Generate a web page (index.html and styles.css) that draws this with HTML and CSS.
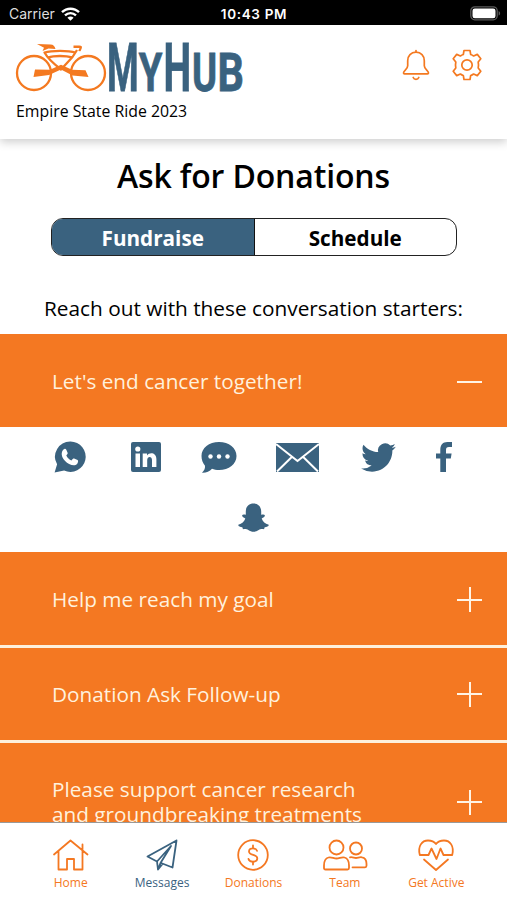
FILE: index.html
```html
<!DOCTYPE html>
<html lang="en">
<head>
<meta charset="utf-8">
<title>MyHub</title>
<link rel="stylesheet" href="styles.css">
</head>
<body>
<div class="app">
  <div class="status">
    <div class="carrier"><span>Carrier</span>
      <svg width="19" height="14" viewBox="0 0 19 14" fill="none" stroke="#fff" stroke-width="2.4"><path d="M1 5.200C5.800.5 13.200.5 18 5.200"/><path d="M4 8.400c3.200-3 7.800-3 11 0"/><path d="M6.400 10.700c1.800-1.700 4.400-1.700 6.200 0L9.500 13.800z" fill="#fff" stroke="none"/></svg>
    </div>
    <div class="clock">10:43 PM</div>
    <div class="battery"><svg width="31" height="15" viewBox="0 0 31 15"><rect x=".8" y=".8" width="26.400" height="13" rx="4" fill="none" stroke="#5b5b5b" stroke-width="1.300"/><rect x="2.500" y="2.400" width="23" height="9.800" rx="2.300" fill="#fff"/><path d="M28.600 5c2 .8 2 3.800 0 4.600z" fill="#5b5b5b"/></svg></div>
  </div>
  <header class="header">
    <div class="brand">
      <svg class="logo" width="240" height="52" viewBox="0 0 240 52">
        <g fill="none" stroke="#f47920" stroke-width="2.300"><circle cx="19" cy="32" r="17"/><circle cx="73" cy="32" r="17"/></g>
        <path fill="#f47920" d="M22 3l13.500.6c3 .2 4 1.500 5 4.400l-7-.6-6 2.600 1.500-3.200zM58.500 4.500h5.800c2.500 0 3.200 1 2.400 3l-1.200 2.800-2.200-.3 1.200-3h-6z"/>
        <path fill="none" stroke="#f47920" stroke-width="2.300" stroke-linejoin="round" d="M62 9L57.500 16 46 28.500C39 23 33 18 29.500 11.500c7-2.300 24-2.300 31 0M33 16.500c6-2 18-2 24 0"/>
        <path fill="#f47920" d="M20 28.500l15 .3 11-5 11 5 13.500.5 3 6.700-16-1.500L46 28.500l-12 5.500-15.500 2z"/>
        <g class="word">
          <text transform="translate(92 50) scale(.54 1)" font-size="67">M</text>
          <text transform="translate(123.700 50) scale(.7 1)" font-size="54.500">Y</text>
          <text transform="translate(148.600 50) scale(.585 1)" font-size="67">H</text>
          <text transform="translate(177 50) scale(.7 1)" font-size="54.500">U</text>
          <text transform="translate(202.500 50) scale(.76 1)" font-size="54.500">B</text>
        </g>
      </svg>
      <div class="event">Empire State Ride 2023</div>
    </div>
    <div class="actions">
      <svg width="28" height="32" viewBox="0 0 28 32" fill="none" stroke="#f47920" stroke-width="1.700" stroke-linecap="round" stroke-linejoin="round"><path d="M14 1.500v1.500M14 3.200c-5 0-8.300 3.500-8.300 8.500v5c0 3.500-4.200 5-4.200 7.300 0 .6.500.9 1 .9h23c.5 0 1-.3 1-.9 0-2.300-4.200-3.800-4.200-7.300v-5c0-5-3.300-8.500-8.300-8.500zM11.200 28.500c1 2.400 4.600 2.400 5.600 0"/></svg>
      <svg width="32" height="32" viewBox="0 0 32 32" fill="none" stroke="#f47920" stroke-width="1.700" stroke-linejoin="round"><path d="M13 1.500h6l.7 4c1 .3 2 .8 2.900 1.500l3.700-1.600 3.500 4.400-2.600 3.200c.4 2 .4 4 0 6l2.600 3.200-3.500 4.400-3.700-1.600c-.9.700-1.900 1.200-2.900 1.500l-.7 4h-6l-.7-4c-1-.3-2-.8-2.900-1.500l-3.700 1.600-3.500-4.400L4.800 19c-.4-2-.4-4 0-6L2.200 9.800l3.500-4.400L9.400 7c.9-.7 1.900-1.200 2.900-1.500z"/><circle cx="16" cy="16" r="5.200"/></svg>
    </div>
  </header>
  <main class="content">
    <h1>Ask for Donations</h1>
    <div class="tabs"><div class="tab active">Fundraise</div><div class="tab">Schedule</div></div>
    <p class="lead">Reach out with these conversation starters:</p>
    <section class="item"><span>Let's end cancer together!</span><i class="sign minus"></i></section>
    <div class="share">
      <div class="row">
        <svg width="32" height="32" viewBox="0 0 32 32"><path fill="#3a627f" d="M16.500.5a15.200 15.200 0 1 1-6.400 29L.6 31.500l2.500-8.200A15.200 15.200 0 0 1 16.500.5z"/><path fill="#fff" d="M9.500 8.500c1-1 2.300-.9 2.800.2l1.300 3c.3.700-.2 1.500-1.300 2.700 1.200 2.400 2.900 4 5.200 5 1.300-1.600 1.900-2.100 2.600-1.800l3.500 1.500c.9.500.5 2.800-.5 3.800-1.800 1.800-4.800 1.600-8 0-3-1.500-5.300-4-6.800-7-1-2.700-.8-5.500 1.200-7.400z"/></svg>
        <svg width="30" height="30" viewBox="0 0 30 30"><rect width="30" height="30" rx="2" fill="#3a627f"/><g fill="#fff"><circle cx="6.800" cy="7" r="2.600"/><path d="M4.500 11.500H9V25H4.500zM11.700 11.500H16v1.900c2.400-3.700 9.400-3.100 9.400 3.600v8H21v-7c0-4.300-4.800-4-4.800 0v7h-4.500z"/></g></svg>
        <svg width="36" height="31" viewBox="0 0 36 31"><path fill="#3a627f" d="M18 0c10 0 17.500 6 17.500 14S28 28 18 28c-2.500 0-5-.4-7-1.200C8.500 29.500 4.800 31 1 30.700c2.300-2.200 3.200-4.400 3-7C1.700 21 .5 17.800.5 14 .5 6 8 0 18 0z"/><g fill="#fff"><circle cx="9.500" cy="14.500" r="2.200"/><circle cx="18" cy="14.500" r="2.200"/><circle cx="26.500" cy="14.500" r="2.200"/></g></svg>
        <svg width="43" height="29" viewBox="0 0 43 29"><path fill="#3a627f" d="M0 0h43v29H0z"/><path fill="none" stroke="#fff" stroke-width="2" d="M0 1l21.500 17L43 1M1 28.500L15.800 14M42 28.500L27.200 14"/></svg>
        <svg width="35" height="29" viewBox="0 2 24 20"><path fill="#3a627f" d="M23.950 4.570a10 10 0 0 1-2.820.77 4.960 4.960 0 0 0 2.160-2.720c-.95.550-2 .950-3.120 1.180a4.920 4.920 0 0 0-8.380 4.480C7.690 8.090 4.070 6.130 1.640 3.160a4.820 4.820 0 0 0-.670 2.480c0 1.710.870 3.210 2.190 4.100a4.900 4.900 0 0 1-2.230-.620v.060a4.920 4.920 0 0 0 3.950 4.830 5 5 0 0 1-2.210.080 4.940 4.940 0 0 0 4.600 3.420A9.870 9.870 0 0 1 0 19.540a14 14 0 0 0 7.550 2.210c9.050 0 14-7.500 14-13.980 0-.210 0-.420-.020-.630a9.940 9.940 0 0 0 2.420-2.570z"/></svg>
        <svg width="16" height="30" viewBox="0 0 16 30"><path fill="#3a627f" d="M4.300 30V16.500H0v-5h4.300V7.700C4.300 2.700 7 0 11.300 0H16v5h-3c-2.400 0-3 1.100-3 2.900v3.600h5.600l-.8 5H10V30z"/></svg>
      </div>
      <svg width="31" height="29" viewBox="0 0 31 29"><path fill="#3a627f" d="M15.500.5c4.700 0 7.700 3.300 7.700 8v3.300c1.300-.3 3-.6 3.500.3.600 1.400-1.200 2.300-3 3.300 1.200 3.200 3.300 5.300 7 6.300.3 1.700-1.900 2.300-4 2.600l-.7 1.900c-1.700-.2-3.700-.4-5.300.8-3.300 2.400-7.100 2.400-10.400 0-1.600-1.200-3.600-1-5.300-.8l-.7-1.900c-2.100-.3-4.300-.9-4-2.600 3.700-1 5.800-3.100 7-6.300-1.800-1-3.600-1.900-3-3.300.5-.9 2.200-.6 3.500-.3V8.500c0-4.700 3-8 7.700-8z"/></svg>
    </div>
    <section class="item"><span>Help me reach my goal</span><i class="sign plus"></i></section>
    <section class="item"><span>Donation Ask Follow-up</span><i class="sign plus"></i></section>
    <section class="item tall"><span>Please support cancer research<br>and groundbreaking treatments</span><i class="sign plus"></i></section>
  </main>
  <nav class="nav">
    <div class="link"><svg width="36" height="32" viewBox="0 0 36 32"><path d="M1 15.500L17.500 1.500 34.500 15.500M5.500 12v18.500h8.500V20h7v10.500h8.500V12M29.500 10.500V5.500"/></svg><span>Home</span></div>
    <div class="link current"><svg width="32" height="32" viewBox="0 0 32 32"><path d="M30.500 1.500L1.500 17.500l9.500 5M30.500 1.500l-4 27-11.500-4.500M11 22.500L25 7 14.500 24l-2.500 6.500zM12 30.500l4.500-5.500"/></svg><span>Messages</span></div>
    <div class="link"><svg width="32" height="32" viewBox="0 0 32 32"><circle cx="16" cy="16" r="14.800"/><path d="M20 11.800c-.6-1.600-2-2.500-4-2.500-2.300 0-4 1.200-4 3.200 0 4.500 8.300 2.300 8.300 6.800 0 2.200-1.800 3.400-4.300 3.400-2.400 0-4-1-4.500-2.800M16 6.500v2.800M16 22.700v2.800"/></svg><span>Donations</span></div>
    <div class="link"><svg width="46" height="32" viewBox="0 0 46 32"><circle cx="14.500" cy="8.500" r="7"/><circle cx="34" cy="9.500" r="6"/><path d="M6.500 18.500c3-.8 5 1 8 1s5-1.800 8-1c3 .8 4.500 3.500 4.500 8v2.500c0 1-.5 1.500-1.500 1.500H3.500c-1 0-1.500-.5-1.500-1.500v-2.500c0-4.500 1.500-7.200 4.500-8zM28 18.300c2.500-.5 4 .7 6 .7s3.500-1.200 6-.7c3 .5 4.500 3 4.500 6.500v2c0 1-.5 1.500-1.500 1.500H30.500"/></svg><span>Team</span></div>
    <div class="link"><svg width="36" height="32" viewBox="0 0 36 32"><path d="M1.800 16C-.5 7 4 1.500 10 1.500c4 0 6.500 1.500 8 3.500 1.500-2 4-3.500 8-3.500 6 0 10.500 5.500 8.200 14.500H25.500L22.500 9.500l-4 10.500-5-10.500L10.500 16zM6 20.500L18 31 30 20.500"/></svg><span>Get Active</span></div>
  </nav>
</div>
</body>
</html>
```
FILE: styles.css
```css
* { box-sizing: border-box; }
body { margin: 0; font-family: "Open Sans", sans-serif; color: #000; background: #fff; }
svg { display: block; flex: none; overflow: visible; }
.app { width: 507px; height: 900px; display: flex; flex-direction: column; overflow: hidden; }
.status { height: 25px; flex: none; background: #000; color: #fff; display: grid; grid-template-columns: 1fr auto 1fr; align-items: center; padding: 2px 6px 0 9px; font: 14px/20px Inter, sans-serif; }
.carrier { display: flex; align-items: center; gap: 6px; color: #ddd; }
.clock { font-weight: 600; font-size: 13.500px; letter-spacing: .65px; margin-right: 2px; }
.battery { justify-self: end; }
.header { height: 114px; flex: none; background: #fff; display: flex; justify-content: space-between; padding: 16px 24px 0 15px; box-shadow: 0 3px 9px rgba(0,0,0,.2); position: relative; }
.word { font-family: Roboto, sans-serif; font-weight: 700; fill: #3a627f; stroke: #3a627f; stroke-width: .8px; }
.event { font-size: 15.850px; line-height: 22px; margin-top: 7px; padding-left: 1px; }
.actions { display: flex; gap: 21px; padding-top: 8px; }
.content { flex: 1; min-height: 0; overflow: hidden; display: flex; flex-direction: column; }
h1 { margin: 15px 0 0; font-size: 32px; line-height: 44px; font-weight: 600; letter-spacing: -.15px; text-align: center; flex: none; }
.tabs { flex: none; display: flex; width: 406px; height: 38px; margin: 20px 0 0 51px; border: 1px solid #222; border-radius: 12px; overflow: hidden; }
.tab { flex: 1; text-align: center; font-weight: 700; font-size: 20.700px; line-height: 38px; }
.active { background: #3a627f; color: #fff; border-right: 1px solid #111; }
.lead { flex: none; margin: 37px 0 11px; font-size: 20.800px; line-height: 30px; text-align: center; }
.item { flex: none; height: 93px; background: #f47822; color: #fff1dd; display: flex; align-items: center; justify-content: space-between; padding: 2px 25px 0 52px; font-size: 20.750px; line-height: 25px; }
.item + .item { border-top: 3px solid #fdf0dc; height: 95px; padding-top: 0; }
.item + .item.tall { height: 121px; }
.sign { width: 25px; height: 26px; background: linear-gradient(#fff4e5, #fff4e5) center / 25px 2px no-repeat; }
.plus { background: linear-gradient(#fff4e5, #fff4e5) center / 25px 2px no-repeat, linear-gradient(#fff4e5, #fff4e5) center / 2px 25px no-repeat; }
.share { flex: none; height: 125px; display: flex; flex-direction: column; align-items: center; padding-top: 14px; gap: 30px; }
.row { width: 399px; display: flex; justify-content: space-between; align-items: center; padding-right: 1px; }
.row svg:nth-child(2) { margin-left: 5px; }
.row svg:nth-child(4) { margin: 0 2px 0 -2px; }
.nav { height: 78px; flex: none; border-top: 1px solid #999; background: #fff; display: grid; grid-template-columns: repeat(5, 91.400px); justify-content: center; padding-top: 16px; }
.link { display: flex; flex-direction: column; align-items: center; color: #f47822; font-size: 12px; line-height: 18px; gap: 3px; }
.link svg { fill: none; stroke: currentColor; stroke-width: 1.800; stroke-linecap: round; stroke-linejoin: round; }
.current { color: #3a627f; }
```
